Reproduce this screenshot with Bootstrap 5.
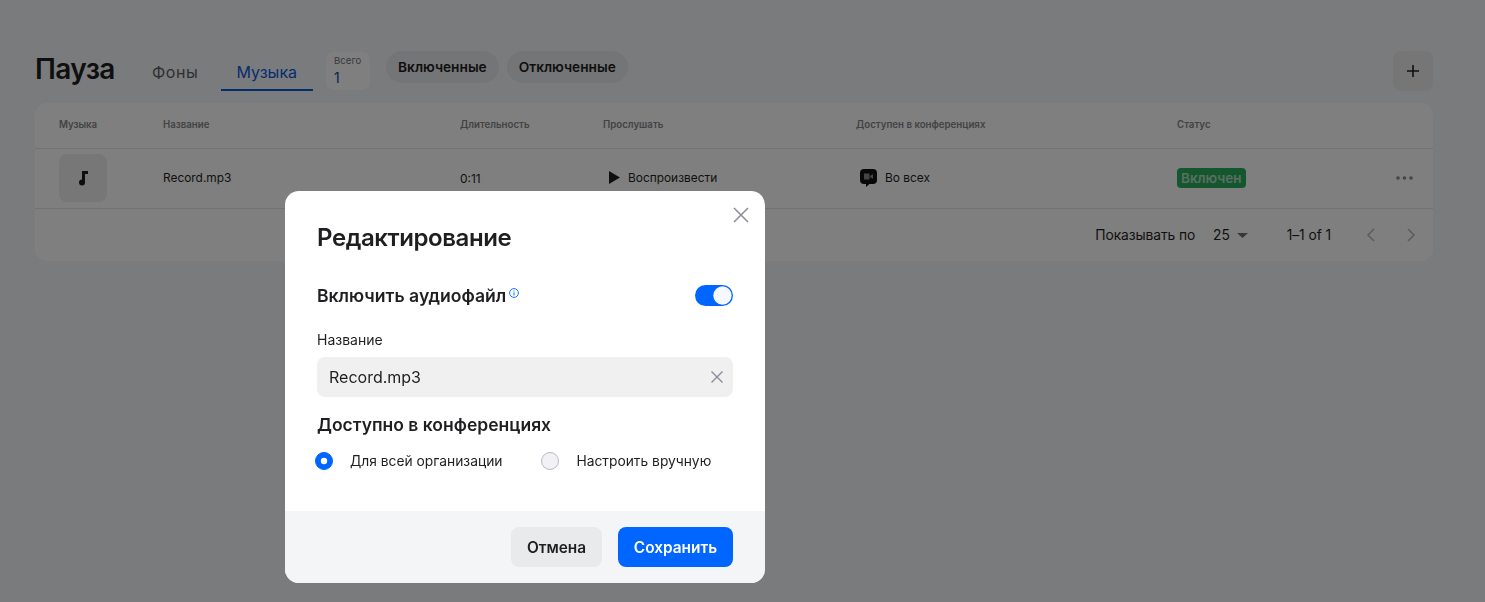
<!DOCTYPE html>
<html lang="ru">
<head>
<meta charset="utf-8">
<title>Пауза</title>
<link href="https://cdn.jsdelivr.net/npm/bootstrap@5.3.0/dist/css/bootstrap.min.css" rel="stylesheet">
<style>
html,body{height:602px;overflow:hidden}
body{background:#f5f7fa;font-family:Inter,"Noto Sans",sans-serif;color:#1f1f22}
.pg{padding:51px 52px 0 35px}
.hdr{height:40px;margin-bottom:12px}
.ttl{font-size:28px;font-weight:600;line-height:34px;margin:0;width:101px;padding-top:0;letter-spacing:-.6px;position:relative;top:1px}
.tabs-x{gap:6px;align-self:flex-start;height:40px}
.tab-x{font-size:16px;line-height:20px;padding:11px 16px 7px;color:#5e5f63;text-decoration:none;border-bottom:2px solid transparent;display:block;height:40px}
.tab-x:first-child{letter-spacing:.6px}
.tab-x.on{color:#0a5ae0;border-bottom-color:#0b5ad8}
.tot{width:44px;height:38px;background:#fff;border-radius:8px;margin:1px 16px 0 13px;padding:3px 8px;font-size:9.6px;line-height:12px;color:#75767a}
.tot b{display:block;font-weight:400;font-size:14px;line-height:16px;color:#0a4aa8;margin-top:3px}
.fltr{border:0;border-radius:16px;height:32px;padding:0 12px;background:#e9eaed;font-size:13.7px;font-weight:600;color:#1f1f22;margin-right:8px}
.plus{width:40px;height:40px;background:#eceded;border-radius:8px;border:0;padding:0}
.tbl-box{width:1398px;height:158px;background:#fff;border-radius:12px;overflow:hidden}
.tbl-box table{table-layout:fixed;width:100%;margin:0}
.tbl-box th{font-size:9.7px;font-weight:600;color:#85868a;height:45px;padding:0 0 0 24px;vertical-align:middle;border-bottom:1px solid #e3e4e6;background:transparent}
.tbl-box td{font-size:11.9px;height:60px;padding:0 0 0 24px;vertical-align:middle;border-bottom:1px solid #e3e4e6;background:transparent;color:#1f1f22}
.c1{width:104px}.c2{width:297px}.c3{width:143px}.c4{width:253px}.c5{width:321px}
.thumb{width:48px;height:48px;background:#eeeeef;border-radius:8px}
.tbl-box td.dur{padding-top:2px}
.ply{margin-left:5px}
.vid{margin-left:3px}
.stat{background:#29ae5d;color:#b5dcc4;font-size:13.5px;font-weight:600;border-radius:4px;padding:2px 4px;line-height:16px;display:inline-block;height:20px}
.row-end{padding-right:20px}
.ftr{height:53px;font-size:13.8px;color:#1f1f22;padding-right:17px;letter-spacing:-.08px}
.m-a{margin-left:18px}.m-b{margin-left:7px}.m-c{margin-left:39px}.m-d{margin-left:35px}.m-e{margin-left:32px}
.ov{position:fixed;inset:0;background:rgba(0,0,0,.5)}
.dlg{position:absolute;left:285px;top:191px;width:480px;height:392px;background:#fff;border-radius:14px;overflow:hidden}
.dlg-x{position:absolute;top:16px;right:16px;width:16px;height:16px;padding:0;border:0;background:none;line-height:0}
.dlg-body{padding:32px 32px 0;height:320px}
.dlg-t{font-size:24px;font-weight:600;line-height:29px;margin:0 0 33px;color:#1f1f22;letter-spacing:-.42px}
.sw-row{height:24px;margin-bottom:22px}
.sw-l{font-size:17.6px;font-weight:600;line-height:22px;padding-bottom:2px}
.inf{vertical-align:top;margin:3px 0 0 3px}
.form-switch .sw-i,.form-switch .sw-i:checked{width:38px;height:21px;margin:0;background-color:#0066ff;border:0;background-size:contain;background-position:right center;background-image:url("data:image/svg+xml,%3csvg xmlns='http://www.w3.org/2000/svg' viewBox='-4 -4 8 8'%3e%3ccircle r='3.5' fill='%23f6f8ff'/%3e%3c/svg%3e")}
.fld-l{font-size:14px;line-height:18px;margin-bottom:8px;color:#1f1f22}
.fld{position:relative;height:40px;margin-bottom:17px}
.fld .form-control{height:40px;background:#f0f0f1;border:0;border-radius:8px;font-size:16px;padding:0 40px 0 12px;color:#1f1f22}
.fld-x{position:absolute;right:10px;top:14px;line-height:0}
.sec{font-size:17.5px;font-weight:600;line-height:22px;margin-bottom:16px}
.rd{margin:0 0 0 -2px;gap:17px;font-size:13.8px;line-height:18px}
.rd .form-check-input{width:18px;height:18px;margin:0;flex:none}
.rd .r-on:checked{background-color:#0066ff;border-color:#0066ff;background-image:url("data:image/svg+xml,%3csvg xmlns='http://www.w3.org/2000/svg' viewBox='-4 -4 8 8'%3e%3ccircle r='1.6' fill='%23fff'/%3e%3c/svg%3e")}
.rd .r-off{background-color:#f2f2f6;border-color:#b8bac4}
.rd-g{gap:41px}
.dlg-f{height:72px;background:#f4f5f7;padding:16px 32px;gap:16px}
.bt{height:40px;border:0;border-radius:8px;font-size:15.4px;font-weight:600;padding:1px 0 0}
.bt-g{background:#e9eaec;color:#1f1f22;width:91px}
.bt-p{background:#0066ff;color:#fff;width:115px}
</style>
</head>
<body>
<div class="pg">
  <div class="hdr d-flex align-items-start">
    <h1 class="ttl">Пауза</h1>
    <div class="tabs-x d-flex">
      <a class="tab-x" href="#">Фоны</a>
      <a class="tab-x on" href="#">Музыка</a>
    </div>
    <div class="tot">Всего<b>1</b></div>
    <button class="fltr">Включенные</button>
    <button class="fltr">Отключенные</button>
    <button class="plus ms-auto d-flex align-items-center justify-content-center">
      <svg width="12" height="12" viewBox="0 0 12 12"><path d="M6 0v12M0 6h12" stroke="#1f1f22" stroke-width="1.6"/></svg>
    </button>
  </div>
  <div class="tbl-box">
    <table class="table">
      <colgroup><col class="c1"><col class="c2"><col class="c3"><col class="c4"><col class="c5"><col></colgroup>
      <thead><tr><th>Музыка</th><th>Название</th><th>Длительность</th><th>Прослушать</th><th>Доступен в конференциях</th><th>Статус</th></tr></thead>
      <tbody><tr>
        <td><div class="thumb d-flex align-items-center justify-content-center">
          <svg width="12" height="16" viewBox="0 0 12 16"><path d="M5 1h6v3H8v8.5a3 3 0 1 1-3-3z" fill="#1f1f22"/></svg>
        </div></td>
        <td>Record.mp3</td>
        <td class="dur">0:11</td>
        <td><div class="d-flex align-items-center gap-2"><svg class="ply" width="12" height="13" viewBox="0 0 12 13"><path d="M1 0l11 6.5L1 13z" fill="#1f1f22"/></svg>Воспроизвести</div></td>
        <td><div class="d-flex align-items-center gap-2"><svg class="vid" width="18" height="18" viewBox="0 0 18 18"><path d="M5 0h9a4 4 0 0 1 4 4v7a4 4 0 0 1-4 4h-3.5L7 18v-3H5a4 4 0 0 1-4-4V4a4 4 0 0 1 4-4z" fill="#111"/><path d="M5 4.5h5.5v6H5zM11 7l3-2v5l-3-2z" fill="#888"/></svg>Во всех</div></td>
        <td><div class="row-end d-flex align-items-center justify-content-between"><span class="stat">Включен</span>
          <svg width="17" height="4" viewBox="0 0 17 4"><circle cx="2" cy="2" r="1.8" fill="#8a8b8f"/><circle cx="8.5" cy="2" r="1.8" fill="#8a8b8f"/><circle cx="15" cy="2" r="1.8" fill="#8a8b8f"/></svg></div></td>
      </tr></tbody>
    </table>
    <div class="ftr d-flex align-items-center justify-content-end">
      <span>Показывать по</span>
      <span class="m-a">25</span>
      <svg class="m-b" width="11" height="5" viewBox="0 0 11 5"><path d="M0 0h11L5.5 5z" fill="#6f7074"/></svg>
      <span class="m-c">1–1 of 1</span>
      <svg class="m-d" width="9" height="14" viewBox="0 0 9 14"><path d="M8 1L2 7l6 6" fill="none" stroke="#b9babd" stroke-width="1.6"/></svg>
      <svg class="m-e" width="9" height="14" viewBox="0 0 9 14"><path d="M1 1l6 6-6 6" fill="none" stroke="#b9babd" stroke-width="1.6"/></svg>
    </div>
  </div>
</div>
<div class="ov">
  <div class="dlg">
    <button class="dlg-x" aria-label="Закрыть"><svg width="16" height="16" viewBox="0 0 16 16"><path d="M1 1l14 14M15 1L1 15" stroke="#8a8c99" stroke-width="1.5"/></svg></button>
    <div class="dlg-body">
      <h2 class="dlg-t">Редактирование</h2>
      <div class="sw-row d-flex align-items-center justify-content-between">
        <div class="sw-l">Включить аудиофайл<svg class="inf" width="10" height="10" viewBox="0 0 10 10"><circle cx="5" cy="5" r="4.4" fill="none" stroke="#0066ff" stroke-width=".9"/><path d="M5 2.6v.9M5 4.4v3" stroke="#0066ff"/></svg></div>
        <div class="form-check form-switch m-0 p-0 d-flex"><input class="form-check-input sw-i" type="checkbox" checked></div>
      </div>
      <div class="fld-l">Название</div>
      <div class="fld">
        <input class="form-control" value="Record.mp3">
        <span class="fld-x"><svg width="12" height="12" viewBox="0 0 12 12"><path d="M.5.5l11 11M11.5.5l-11 11" stroke="#8a8c99" stroke-width="1.4"/></svg></span>
      </div>
      <div class="sec">Доступно в конференциях</div>
      <div class="rd-g d-flex">
        <label class="rd d-flex align-items-center"><input class="form-check-input r-on" type="radio" name="a" checked>Для всей организации</label>
        <label class="rd d-flex align-items-center"><input class="form-check-input r-off" type="radio" name="a">Настроить вручную</label>
      </div>
    </div>
    <div class="dlg-f d-flex justify-content-end">
      <button class="bt bt-g">Отмена</button>
      <button class="bt bt-p">Сохранить</button>
    </div>
  </div>
</div>
</body>
</html>
